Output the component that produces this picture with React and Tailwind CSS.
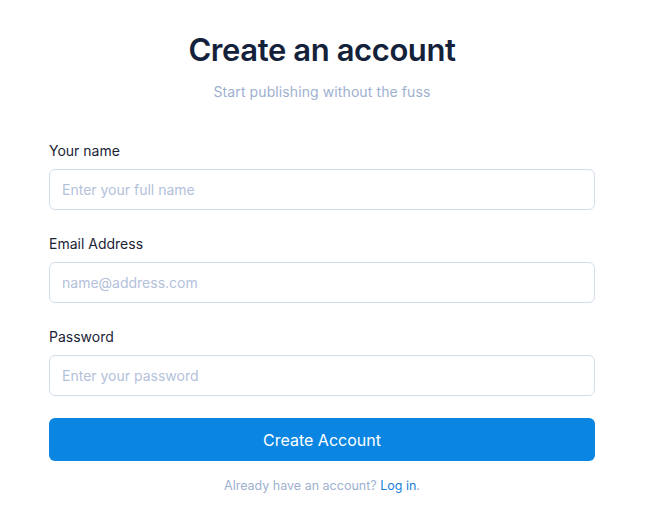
import React from 'react';

const Field = ({ label, type = 'text', placeholder }) => (
  <div className="flex flex-col">
    <label className="text-[14px] leading-5 text-[#1b2435] mb-2">{label}</label>
    <input
      type={type}
      placeholder={placeholder}
      className="h-[41px] w-full rounded-md border border-[#d3deeb] bg-white px-[12px] text-[14px] text-[#1b2435] placeholder:text-[#b3c1da] outline-none"
    />
  </div>
);

const App = () => {
  return (
    <div className="min-h-screen bg-white pr-[3px] font-['Inter','Liberation_Sans',sans-serif]">
      <div className="mx-auto w-[546px] pt-[30px]">
        <h1 className="text-center text-[31px] leading-10 font-semibold tracking-[-0.4px] text-[#14213a]">
          Create an account
        </h1>
        <p className="mt-3 text-center text-[14px] leading-5 tracking-[0.1px] text-[#9eb0d0]">
          Start publishing without the fuss
        </p>

        <form className="mt-[39px] flex flex-col gap-6" onSubmit={(e) => e.preventDefault()}>
          <Field label="Your name" placeholder="Enter your full name" />
          <Field label="Email Address" type="email" placeholder="name@address.com" />
          <Field label="Password" type="password" placeholder="Enter your password" />
        </form>

        <button className="mt-[22px] h-[43px] w-full rounded-md bg-[#0a86e2] text-[16px] text-white">
          Create Account
        </button>

        <p className="mt-[17px] text-center text-[12.5px] leading-4 text-[#9eb0d0]">
          Already have an account? <a href="#" className="text-[#1b7fdc]">Log in</a>.
        </p>
      </div>
    </div>
  );
};

export default App;
